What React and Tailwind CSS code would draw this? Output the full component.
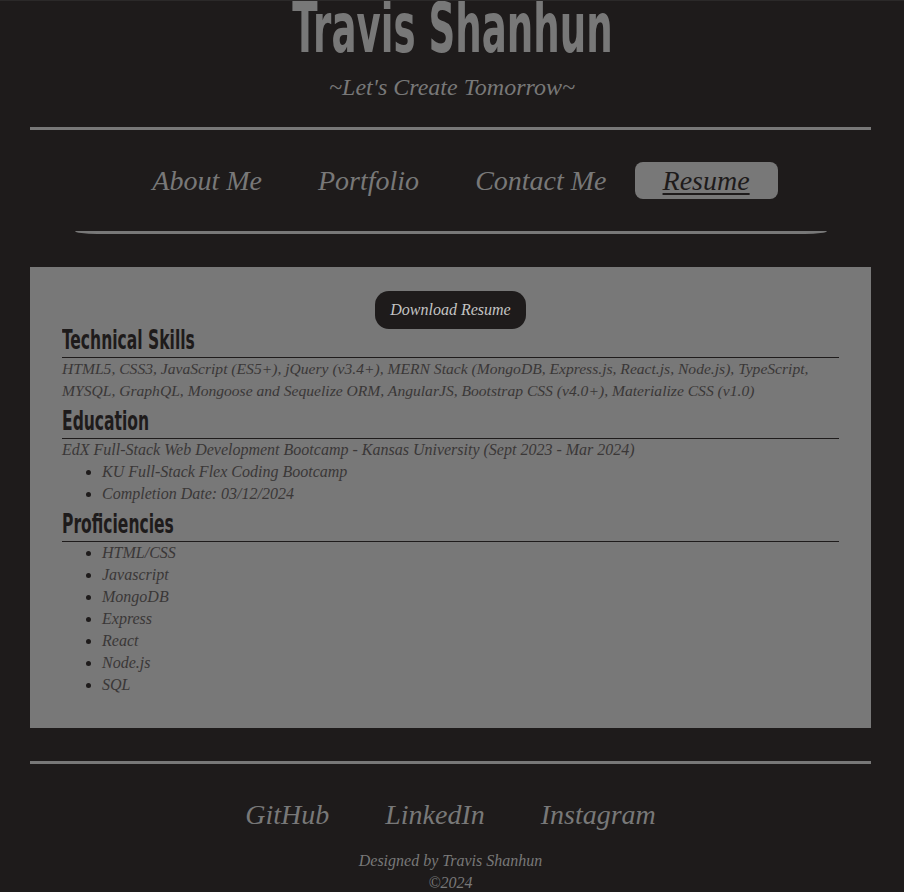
import React from "react";

const serif = "font-['Liberation_Serif','DejaVu_Serif',serif] italic";
const narrow = "font-['Liberation_Sans_Narrow','DejaVu_Sans_Condensed',sans-serif]";

function Heading({ children, first }) {
  return (
    <h2
      className={`${narrow} ${first ? "" : "mt-[8px]"} text-[26px] leading-[22px] pb-[6px] border-b border-[#1e1b1b] text-[#1e1b1b] font-bold`}
    >
      <span className="inline-block origin-left scale-x-[0.665]">{children}</span>
    </h2>
  );
}

export default function App() {
  const navItems = ["About Me", "Portfolio", "Contact Me"];
  const profs = ["HTML/CSS", "Javascript", "MongoDB", "Express", "React", "Node.js", "SQL"];
  return (
    <div className="min-h-[892px] bg-[#1e1b1b] border-t border-[#2b2929] overflow-hidden text-[#787878]">
      <header className="text-center">
        <h1 className={`${narrow} -mt-[8px] text-[70px] leading-none font-bold text-[#787878]`}>
          <span className="inline-block scale-x-[0.59]">Travis Shanhun</span>
        </h1>
        <p className={`${serif} mt-[10px] text-[24px] leading-[28px]`}>~Let's Create Tomorrow~</p>
      </header>

      <div className="ml-[30px] w-[841px]">
        <div className="mt-[26px] h-[3px] bg-[#787878]" />

        <nav className="ml-[45px] w-[752px] pt-[32px] pb-[32px] border-b-[3px] border-[#787878] rounded-[22px/3px]">
          <ul className={`${serif} flex justify-center text-[28px]`}>
            {navItems.map((t) => (
              <li key={t} className="h-[37px] flex items-center px-[28px]">
                {t}
              </li>
            ))}
            <li className="h-[37px] flex items-center px-[28px] bg-[#787878] rounded-[8px] text-[#1e1b1b] underline decoration-[1.5px] underline-offset-[3px]">
              Resume
            </li>
          </ul>
        </nav>

        <main className="mt-[33px] bg-[#787878] pt-[24px] px-[32px] pb-[32px] text-[#3a3737]">
          <div className="flex justify-center">
            <button className={`${serif} h-[38px] px-[15px] rounded-[14px] bg-[#1e1b1b] text-[16px] text-[#c4c4c4]`}>
              Download Resume
            </button>
          </div>

          <Heading first>Technical Skills</Heading>
          <p className={`${serif} text-[15.6px] leading-[22px]`}>
            HTML5, CSS3, JavaScript (ES5+), jQuery (v3.4+), MERN Stack (MongoDB, Express.js, React.js, Node.js), TypeScript,
            MYSQL, GraphQL, Mongoose and Sequelize ORM, AngularJS, Bootstrap CSS (v4.0+), Materialize CSS (v1.0)
          </p>

          <Heading>Education</Heading>
          <p className={`${serif} text-[16px] leading-[22px]`}>
            EdX Full-Stack Web Development Bootcamp - Kansas University (Sept 2023 - Mar 2024)
          </p>
          <ul className={`${serif} list-disc pl-[40px] text-[16px] leading-[22px] marker:text-[#1e1b1b]`}>
            <li>KU Full-Stack Flex Coding Bootcamp</li>
            <li>Completion Date: 03/12/2024</li>
          </ul>

          <Heading>Proficiencies</Heading>
          <ul className={`${serif} list-disc pl-[40px] text-[16px] leading-[22px] marker:text-[#1e1b1b]`}>
            {profs.map((p) => (
              <li key={p}>{p}</li>
            ))}
          </ul>
        </main>

        <div className="mt-[33px] h-[3px] bg-[#787878]" />

        <footer className={`${serif} text-center`}>
          <ul className="mt-[33px] flex justify-center text-[28px] leading-[36px]">
            <li className="px-[28px]">GitHub</li>
            <li className="px-[28px]">LinkedIn</li>
            <li className="px-[28px]">Instagram</li>
          </ul>
          <p className="mt-[17px] text-[16px] leading-[22px]">Designed by Travis Shanhun</p>
          <p className="text-[16px] leading-[22px]">©2024</p>
        </footer>
      </div>
    </div>
  );
}
